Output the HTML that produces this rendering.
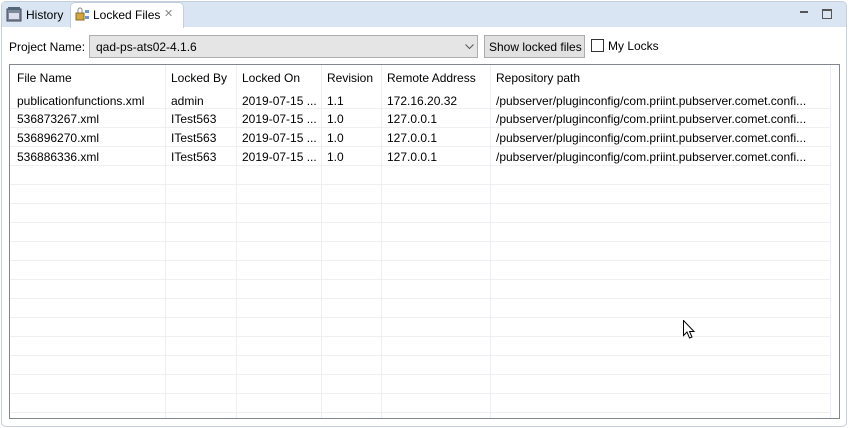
<!DOCTYPE html>
<html><head><style>
*{margin:0;padding:0;box-sizing:border-box}
body{width:849px;height:428px;background:#fff;font-family:"Liberation Sans",sans-serif;font-size:12px;color:#000;position:relative;overflow:hidden}
.a{position:absolute;white-space:nowrap}
</style></head><body>
<div class="a" style="left:1px;top:1px;width:846px;height:426px;border:1px solid #c5cfdb;border-radius:5px;background:#fff"></div>
<div class="a" style="left:2px;top:2px;width:844px;height:25px;background:#d9e5f2;border-radius:4px 4px 0 0"></div>
<div class="a" style="left:70px;top:2px;width:114px;height:26px;background:#fff;border:1px solid #c5cfdb;border-bottom:none;border-radius:5px 5px 0 0"></div>
<svg class="a" style="left:6px;top:6px" width="16" height="16"><rect x="1" y="3" width="14" height="12" fill="#7a8a9a" stroke="#445"/><rect x="3" y="7" width="10" height="6" fill="#dde"/><rect x="2" y="1" width="12" height="3" fill="#567"/></svg>
<div class="a" style="left:26px;top:8px">History</div>
<svg class="a" style="left:74px;top:6px" width="16" height="16"><rect x="2" y="7" width="8" height="7" fill="#d4a640" stroke="#8a6a20"/><path d="M4 7V4a2 2 0 0 1 4 0v3" fill="none" stroke="#888"/><rect x="11" y="4" width="4" height="3" fill="#6a9ad0"/><rect x="11" y="10" width="4" height="3" fill="#6a9ad0"/></svg>
<div class="a" style="left:93px;top:8px">Locked Files</div>
<div class="a" style="left:164px;top:7px;color:#888;font-size:11px">✕</div>
<div class="a" style="left:800px;top:11px;width:8px;height:2px;border:1px solid #555"></div>
<div class="a" style="left:822px;top:9px;width:10px;height:10px;border:1px solid #555;border-top-width:2px"></div>
<div class="a" style="left:9px;top:40px">Project Name:</div>
<div class="a" style="left:89px;top:35px;width:389px;height:23px;background:#e5e5e5;border:1px solid #adadad"></div>
<div class="a" style="left:96px;top:40px">qad-ps-ats02-4.1.6</div>
<svg class="a" style="left:465px;top:44px" width="9" height="6"><path d="M0.5 0.5L4.5 4.5L8.5 0.5" fill="none" stroke="#555"/></svg>
<div class="a" style="left:484px;top:35px;width:101px;height:23px;background:#e1e1e1;border:1px solid #adadad"></div>
<div class="a" style="left:489px;top:40px">Show locked files</div>
<div class="a" style="left:591px;top:39px;width:13px;height:13px;border:1px solid #333;background:#fff"></div>
<div class="a" style="left:608px;top:39px">My Locks</div>
<div class="a" style="left:9px;top:64px;width:831px;height:355px;border:1px solid #828790"></div>
<div id="g"></div>
<script>
var h='';
for(var y=108;y<=412;y+=19)h+='<div class="a" style="left:10px;top:'+y+'px;width:820px;height:1px;background:#f0f0f0"></div>';
[165,236,321,381,490,830].forEach(function(x){h+='<div class="a" style="left:'+x+'px;top:65px;width:1px;height:353px;background:#eaf0f8"></div>'});
var cols=[17,171,242,327,387,496];
var rows=[["File Name","Locked By","Locked On","Revision","Remote Address","Repository path"],
["publicationfunctions.xml","admin","2019-07-15 ...","1.1","172.16.20.32","/pubserver/pluginconfig/com.priint.pubserver.comet.confi..."],
["536873267.xml","ITest563","2019-07-15 ...","1.0","127.0.0.1","/pubserver/pluginconfig/com.priint.pubserver.comet.confi..."],
["536896270.xml","ITest563","2019-07-15 ...","1.0","127.0.0.1","/pubserver/pluginconfig/com.priint.pubserver.comet.confi..."],
["536886336.xml","ITest563","2019-07-15 ...","1.0","127.0.0.1","/pubserver/pluginconfig/com.priint.pubserver.comet.confi..."]];
var ys=[71,94,112,131,150];
rows.forEach(function(r,i){r.forEach(function(t,j){h+='<div class="a" style="left:'+cols[j]+'px;top:'+ys[i]+'px">'+t+'</div>'})});
document.getElementById('g').innerHTML=h;
</script>
<svg class="a" style="left:683px;top:320px" width="13" height="20"><path d="M0.5 0.5V15.5L4 12L6.5 18L9 17L6.5 11.5H11Z" fill="#fff" stroke="#000"/></svg>
</body></html>
